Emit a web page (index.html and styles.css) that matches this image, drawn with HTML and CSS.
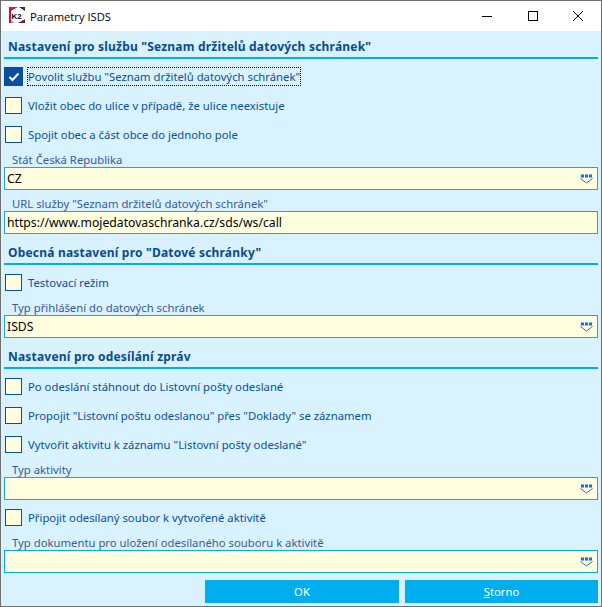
FILE: index.html
```html
<!DOCTYPE html>
<html lang="cs">
<head>
    <meta charset="UTF-8">
    <title>Parametry ISDS</title>
    <link rel="stylesheet" href="styles.css">
</head>
<body>
    <div class="window">
        <div class="titlebar">
            <svg class="app-icon" width="16" height="16" viewBox="0 0 16 16">
                <rect width="16" height="16" fill="#fff"/>
                <rect width="2" height="16" fill="#d0103a"/>
                <path d="M2 0h7L2 4z" fill="#a8324a"/>
                <path d="M10 0h6v4z" fill="#3a2a4a"/>
                <path d="M16 12v4h-7z" fill="#8a1535"/>
                <path d="M2 13l4 3H2z" fill="#b0a0b0"/>
                <text x="2.5" y="11.5" class="app-icon-text">K2</text>
            </svg>
            <span class="title">Parametry ISDS</span>
            <div class="win-buttons">
                <svg width="10" height="10" viewBox="0 0 10 10"><path d="M0 5.5h10" stroke="#000" fill="none"/></svg>
                <svg width="10" height="10" viewBox="0 0 10 10"><rect x=".5" y=".5" width="9" height="9" stroke="#000" fill="none"/></svg>
                <svg width="10" height="10" viewBox="0 0 10 10"><path d="M0 0l10 10M10 0L0 10" stroke="#000" fill="none"/></svg>
            </div>
        </div>

        <div class="content">
            <h2 class="section first">Nastavení pro službu "Seznam držitelů datových schránek"</h2>
            <div class="checks">
                <div class="check-row">
                    <span class="box checked">
                        <svg width="12" height="10" viewBox="0 0 12 10"><path d="M1.5 5l3 3 6-6.5" stroke="#fff" stroke-width="2" fill="none"/></svg>
                    </span>
                    <span class="focused">Povolit službu "Seznam držitelů datových schránek"</span>
                </div>
                <div class="check-row"><span class="box"></span><span>Vložit obec do ulice v případě, že ulice neexistuje</span></div>
                <div class="check-row"><span class="box"></span><span>Spojit obec a část obce do jednoho pole</span></div>
            </div>

            <label class="field-label">Stát Česká Republika</label>
            <div class="field">CZ<svg class="dots" width="13" height="10" viewBox="0 0 13 10"><use href="#picker"/></svg></div>
            <label class="field-label">URL služby "Seznam držitelů datových schránek"</label>
            <div class="field">https://www.mojedatovaschranka.cz/sds/ws/call</div>

            <h2 class="section">Obecná nastavení pro "Datové schránky"</h2>
            <div class="checks">
                <div class="check-row"><span class="box"></span><span>Testovací režim</span></div>
            </div>
            <label class="field-label">Typ přihlášení do datových schránek</label>
            <div class="field">ISDS<svg class="dots" width="13" height="10" viewBox="0 0 13 10"><use href="#picker"/></svg></div>

            <h2 class="section">Nastavení pro odesílání zpráv</h2>
            <div class="checks">
                <div class="check-row"><span class="box"></span><span>Po odeslání stáhnout do Listovní pošty odeslané</span></div>
                <div class="check-row"><span class="box"></span><span>Propojit "Listovní poštu odeslanou" přes "Doklady" se záznamem</span></div>
                <div class="check-row"><span class="box"></span><span>Vytvořit aktivitu k záznamu "Listovní pošty odeslané"</span></div>
            </div>
            <label class="field-label">Typ aktivity</label>
            <div class="field"><svg class="dots" width="13" height="10" viewBox="0 0 13 10"><use href="#picker"/></svg></div>
            <div class="checks">
                <div class="check-row"><span class="box"></span><span>Připojit odesílaný soubor k vytvořené aktivitě</span></div>
            </div>
            <label class="field-label">Typ dokumentu pro uložení odesílaného souboru k aktivitě</label>
            <div class="field bright"><svg class="dots" width="13" height="10" viewBox="0 0 13 10"><use href="#picker"/></svg></div>

            <div class="buttons">
                <button class="btn">OK</button>
                <button class="btn"><u>S</u>torno</button>
            </div>
        </div>
    </div>

    <svg width="0" height="0">
        <defs>
            <g id="picker">
                <rect x="0" y="0" width="13" height="4" fill="#e8f4fb"/>
                <rect x="1" y="0.5" width="3" height="3" fill="#2a6fb0"/>
                <rect x="5" y="0.5" width="3" height="3" fill="#2a6fb0"/>
                <rect x="9" y="0.5" width="3" height="3" fill="#2a6fb0"/>
                <path d="M0.5 4.5l6 4.5 6-4.5" stroke="#2a6fb0" fill="none"/>
            </g>
        </defs>
    </svg>
</body>
</html>
```

FILE: styles.css
```css
html, body {
    margin: 0;
    padding: 0;
}

body {
    width: 602px;
    height: 607px;
    overflow: hidden;
    font-family: "Noto Sans", Arial, sans-serif;
    font-size: 11.3px;
}

.window {
    height: 607px;
    box-sizing: border-box;
    border: 1px solid #6f6f6f;
    display: flex;
    flex-direction: column;
    background-color: #d9f2ff;
}

.titlebar {
    height: 30px;
    flex: none;
    background-color: white;
    display: flex;
    align-items: center;
    padding-left: 8px;
}

.app-icon {
    margin: 0 5px 2px 0;
}

.app-icon-text {
    font-family: "Liberation Sans", sans-serif;
    font-size: 8px;
    font-weight: bold;
    fill: #000;
}

.title {
    font-family: "Open Sans", sans-serif;
    font-size: 11.2px;
    color: #000;
}

.win-buttons {
    margin-left: auto;
    display: flex;
    gap: 35.5px;
    padding-right: 18px;
}

.content {
    flex: 1;
    padding: 0 3px;
    color: #0a4f9e;
}

.section {
    margin: 10px 0 0;
    height: 17px;
    font-size: 12px;
    letter-spacing: 0.2px;
    line-height: 17px;
    font-weight: bold;
    color: #0a4a8f;
    padding-left: 4px;
    padding-bottom: 2px;
    border-bottom: 2px solid #00aeef;
}

.section.first {
    margin-top: 7px;
}

.checks {
    margin-top: 3px;
}

.check-row {
    display: flex;
    align-items: center;
    height: 29px;
    padding-left: 1px;
}

.box {
    width: 15px;
    height: 15px;
    border: 1px solid #0a4f9e;
    background-color: #ffffe0;
    margin-right: 6px;
    flex: none;
}

.box.checked {
    width: 19px;
    height: 19px;
    border: none;
    margin: 0 5px 0 -1px;
    background-color: #0a4f9e;
    display: flex;
    align-items: center;
    justify-content: center;
}

.focused {
    line-height: 17px;
    outline: 1px dotted #000;
}

.field-label {
    display: block;
    height: 15px;
    line-height: 15px;
    margin-top: 3px;
    padding-left: 8px;
    color: #3a5a9a;
}

.field + .field-label {
    margin-top: 6px;
}

.field {
    height: 21px;
    line-height: 21px;
    border: 1px solid #1aa7e8;
    background-color: #ffffe0;
    padding: 0 4px 0 2px;
    color: #000;
    font-size: 12.2px;
    display: flex;
    align-items: center;
}

.field.bright {
    border-color: #00aeef;
}

.dots {
    margin-left: auto;
}

.buttons {
    display: flex;
    justify-content: flex-end;
    gap: 6px;
    margin-top: 7px;
}

.btn {
    width: 194px;
    height: 23px;
    padding: 0;
    border: none;
    background-color: #00aeef;
    color: white;
    font-family: inherit;
    font-size: 11.3px;
}

.btn:last-child {
    width: 193px;
}
```
